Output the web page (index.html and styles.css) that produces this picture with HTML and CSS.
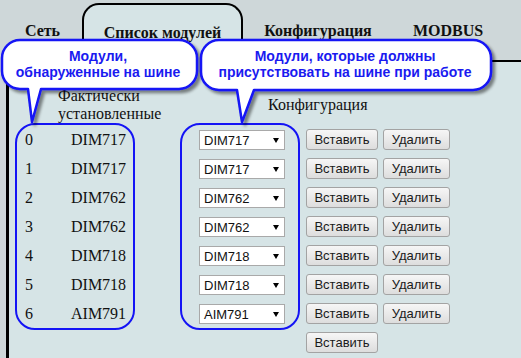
FILE: index.html
```html
<!DOCTYPE html>
<html lang="ru">
<head>
<meta charset="utf-8">
<title>Список модулей</title>
<link rel="stylesheet" href="styles.css">
</head>
<body>
<nav class="tabs">
  <div class="tab tab-net">Сеть</div>
  <div class="tab tab-active">Список модулей</div>
  <div class="tab tab-conf">Конфигурация</div>
  <div class="tab tab-modbus">MODBUS</div>
</nav>
<section class="panel">
  <div class="heads">
    <div class="h-found">Фактически<br>установленные</div>
    <div class="h-config">Конфигурация</div>
  </div>
  <div class="grid">
    <div class="box found">
      <div class="row"><span class="num">0</span><span>DIM717</span></div>
      <div class="row"><span class="num">1</span><span>DIM717</span></div>
      <div class="row"><span class="num">2</span><span>DIM762</span></div>
      <div class="row"><span class="num">3</span><span>DIM762</span></div>
      <div class="row"><span class="num">4</span><span>DIM718</span></div>
      <div class="row"><span class="num">5</span><span>DIM718</span></div>
      <div class="row"><span class="num">6</span><span>AIM791</span></div>
    </div>
    <div class="box config">
      <div class="select"><span>DIM717</span><svg class="arr" width="6" height="5" viewBox="0 0 6 5"><path d="M0 0H6L3 5Z"/></svg></div>
      <div class="select"><span>DIM717</span><svg class="arr" width="6" height="5" viewBox="0 0 6 5"><path d="M0 0H6L3 5Z"/></svg></div>
      <div class="select"><span>DIM762</span><svg class="arr" width="6" height="5" viewBox="0 0 6 5"><path d="M0 0H6L3 5Z"/></svg></div>
      <div class="select"><span>DIM762</span><svg class="arr" width="6" height="5" viewBox="0 0 6 5"><path d="M0 0H6L3 5Z"/></svg></div>
      <div class="select"><span>DIM718</span><svg class="arr" width="6" height="5" viewBox="0 0 6 5"><path d="M0 0H6L3 5Z"/></svg></div>
      <div class="select"><span>DIM718</span><svg class="arr" width="6" height="5" viewBox="0 0 6 5"><path d="M0 0H6L3 5Z"/></svg></div>
      <div class="select"><span>AIM791</span><svg class="arr" width="6" height="5" viewBox="0 0 6 5"><path d="M0 0H6L3 5Z"/></svg></div>
    </div>
    <div class="actions">
      <div class="btnrow"><button class="btn ins">Вставить</button><button class="btn del">Удалить</button></div>
      <div class="btnrow"><button class="btn ins">Вставить</button><button class="btn del">Удалить</button></div>
      <div class="btnrow"><button class="btn ins">Вставить</button><button class="btn del">Удалить</button></div>
      <div class="btnrow"><button class="btn ins">Вставить</button><button class="btn del">Удалить</button></div>
      <div class="btnrow"><button class="btn ins">Вставить</button><button class="btn del">Удалить</button></div>
      <div class="btnrow"><button class="btn ins">Вставить</button><button class="btn del">Удалить</button></div>
      <div class="btnrow"><button class="btn ins">Вставить</button><button class="btn del">Удалить</button></div>
      <div class="btnrow"><button class="btn ins">Вставить</button></div>
    </div>
  </div>
</section>
<svg class="callouts" width="521" height="130" viewBox="0 0 521 130">
  <defs>
    <filter id="sh" x="-10%" y="-20%" width="130%" height="160%">
      <feDropShadow dx="3" dy="3" stdDeviation="1.8" flood-color="#000" flood-opacity="0.45"/>
    </filter>
  </defs>
  <path class="bubble" filter="url(#sh)" d="M20 40H179A18 18 0 0 1 197 58V71A18 18 0 0 1 179 89H41L32 122L28 89H20A18 18 0 0 1 2 71V58A18 18 0 0 1 20 40Z"/>
  <path class="bubble" filter="url(#sh)" d="M219 40H473A18 18 0 0 1 491 58V72A18 18 0 0 1 473 90H254L242 122L237 90H219A18 18 0 0 1 201 72V58A18 18 0 0 1 219 40Z"/>
  <text class="ct" x="98" y="61">Модули,</text>
  <text class="ct" x="98" y="77">обнаруженные на шине</text>
  <text class="ct" x="345" y="61">Модули, которые должны</text>
  <text class="ct" x="345" y="77">присутствовать на шине при работе</text>
</svg>
</body>
</html>
```

FILE: styles.css
```css
html, body {
  margin: 0;
  padding: 0;
}
body {
  width: 521px;
  height: 358px;
  overflow: hidden;
  position: relative;
  background: #ced7d9;
  font-family: "Liberation Serif", "Times New Roman", serif;
  color: #111;
}
.tabs {
  display: flex;
  align-items: flex-end;
  height: 60px;
  margin-left: 6px;
}
.tab {
  box-sizing: border-box;
  height: 38px;
  font-weight: bold;
  font-size: 16px;
  line-height: 18px;
  text-align: center;
}
.tab-net { width: 73px; }
.tab-active {
  position: relative;
  z-index: 1;
  width: 161px;
  height: 59px;
  margin-left: 3px;
  margin-bottom: -2px;
  padding-top: 19px;
  background: #d6e4e6;
  border: 2px solid #000;
  border-bottom: 0;
  border-radius: 17px 17px 0 0;
}
.tab-conf { width: 150px; }
.tab-modbus { width: 110px; }
.panel {
  box-sizing: border-box;
  height: 298px;
  margin-left: 6px;
  background: #d6e4e6;
  border-left: 3px solid #000;
  border-top: 2px solid #000;
}
.heads {
  display: flex;
  height: 61px;
  font-size: 16px;
  line-height: 18px;
}
.h-found {
  width: 150px;
  margin-left: 49px;
  padding-top: 25px;
}
.h-config {
  margin-left: 60px;
  padding-top: 34px;
}
.grid {
  display: flex;
  align-items: flex-start;
}
.box {
  box-sizing: border-box;
  width: 120px;
  height: 207px;
  padding-top: 5px;
  border: 2px solid #1414f5;
  border-radius: 20px;
  display: flex;
  flex-direction: column;
  gap: 9px;
}
.found {
  margin-left: 6px;
  padding-left: 8px;
}
.config {
  margin-left: 45px;
  padding-left: 17px;
}
.row {
  display: flex;
  height: 20px;
  line-height: 20px;
  font-size: 16px;
}
.num {
  width: 46px;
}
.select {
  box-sizing: border-box;
  width: 86px;
  height: 20px;
  display: flex;
  align-items: center;
  justify-content: space-between;
  padding: 0 5px 0 4px;
  background: #fff;
  border: 1px solid #a9a9a9;
  font-family: "Liberation Sans", Arial, sans-serif;
  font-size: 13px;
  color: #111;
}
.arr path {
  fill: #000;
}
.actions {
  margin-left: 6px;
  padding-top: 6px;
  display: flex;
  flex-direction: column;
  gap: 8px;
}
.btnrow {
  display: flex;
  gap: 5px;
  height: 21px;
}
.btn {
  box-sizing: border-box;
  height: 21px;
  margin: 0;
  padding: 0;
  font-family: "Liberation Sans", Arial, sans-serif;
  font-size: 13px;
  color: #1a1a1a;
  background: linear-gradient(#f6f6f6, #dddddd);
  border: 1px solid #a3a3a3;
  border-radius: 3px;
}
.ins { width: 72px; }
.del { width: 67px; }
.callouts {
  position: absolute;
  left: 0;
  top: 0;
  z-index: 2;
  pointer-events: none;
}
.bubble {
  fill: #fff;
  stroke: #1414f5;
  stroke-width: 2.5;
  stroke-linejoin: round;
}
.ct {
  font-family: "Liberation Sans", Arial, sans-serif;
  font-weight: bold;
  font-size: 14px;
  fill: #1a1af0;
  text-anchor: middle;
}
```
